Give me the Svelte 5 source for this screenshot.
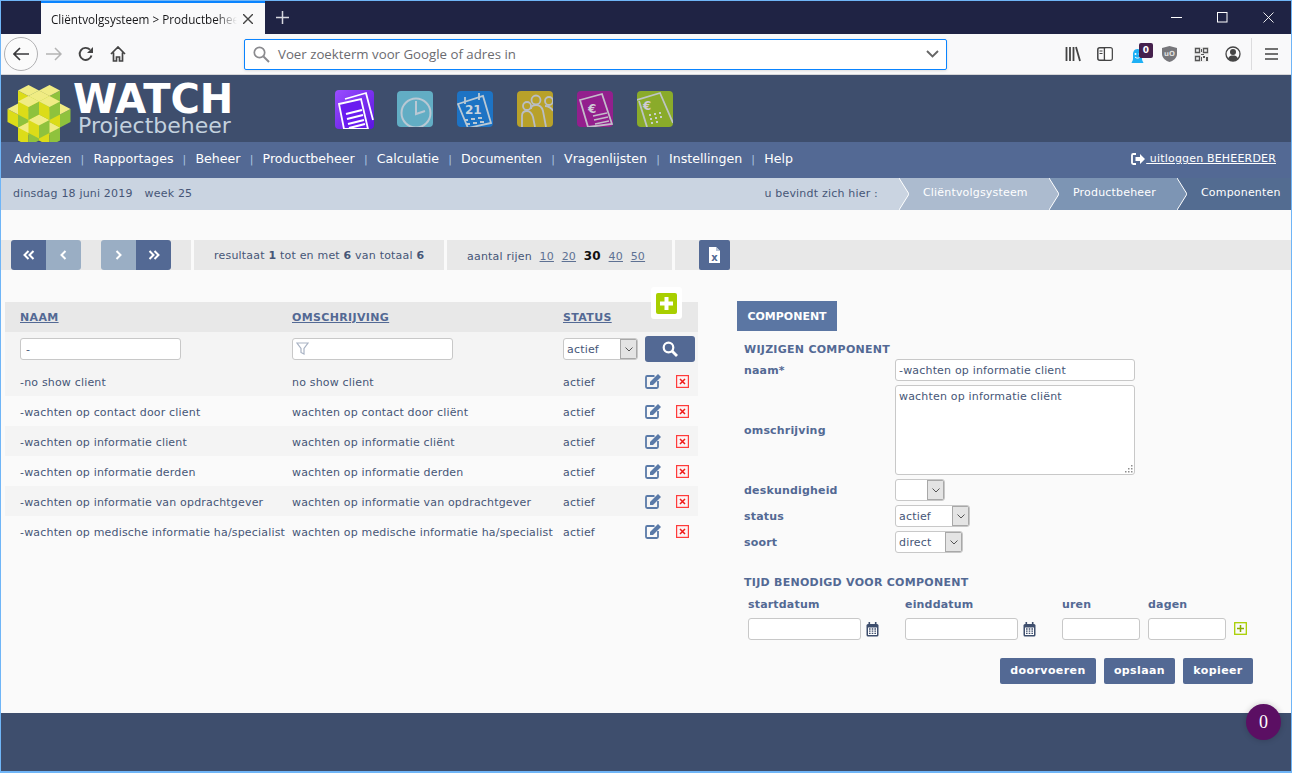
<script>
  const rows = [
    ['-no show client', 'no show client'],
    ['-wachten op contact door client', 'wachten op contact door cliënt'],
    ['-wachten op informatie client', 'wachten op informatie cliënt'],
    ['-wachten op informatie derden', 'wachten op informatie derden'],
    ['-wachten op informatie van opdrachtgever', 'wachten op informatie van opdrachtgever'],
    ['-wachten op medische informatie ha/specialist', 'wachten op medische informatie ha/specialist']
  ];
  const nav = ['Adviezen', 'Rapportages', 'Beheer', 'Productbeheer', 'Calculatie', 'Documenten', 'Vragenlijsten', 'Instellingen', 'Help'];
  const dx = 10.5, dy = 5.5, h = 13, cx = 32, cy = 26;
  const cross = [[0,0],[1,0],[-1,0],[0,1],[0,-1]];
  const mid = [[0,0],[1,1],[-1,-1],[1,-1],[-1,1]];
  const cells = [
    ...cross.map(([i,j]) => [i,j,-1]),
    ...mid.map(([i,j]) => [i,j,0]),
    ...cross.map(([i,j]) => [i,j,1])
  ].sort((a, b) => (a[0]+a[1]+a[2]) - (b[0]+b[1]+b[2]) || a[2] - b[2]);
  const cubes = cells.map(([i,j,k]) => {
    const x = cx + (i - j) * dx, y = cy + (i + j) * dy - k * h;
    return {
      top: `${x},${y - dy} ${x + dx},${y} ${x},${y + dy} ${x - dx},${y}`,
      left: `${x - dx},${y} ${x},${y + dy} ${x},${y + dy + h} ${x - dx},${y + h}`,
      right: `${x + dx},${y} ${x},${y + dy} ${x},${y + dy + h} ${x + dx},${y + h}`
    };
  });
  const grip = [[8,1],[5,4],[8,4],[2,7],[5,7],[8,7]];
</script>

{#snippet chevron()}
  <svg class="sel-chev" viewBox="0 0 8 5" width="8" height="5"><path d="M.5.5 4 4 7.500.5" fill="none" stroke="#555" stroke-width="1"/></svg>
{/snippet}

{#snippet select(text, width)}
  <div class="select" style="width:{width}px"><span>{text}</span><i>{@render chevron()}</i></div>
{/snippet}

{#snippet calendar()}
  <svg class="cal" viewBox="0 0 13 15" width="13" height="15"><rect x=".5" y="2" width="12" height="12.5" rx="1.5" fill="#3e4e6d"/><rect x="2.5" y="0" width="1.6" height="3" fill="#3e4e6d"/><rect x="8.9" y="0" width="1.6" height="3" fill="#3e4e6d"/><rect x="2" y="5.5" width="9" height="7.5" fill="#fff"/><path d="M3 7h1.6M5.7 7h1.6M8.4 7h1.6M3 9.2h1.6M5.7 9.2h1.6M8.4 9.2h1.6M3 11.4h1.6M5.7 11.4h1.6M8.4 11.4h1.6" stroke="#3e4e6d" stroke-width="1.3"/></svg>
{/snippet}

<div class="window">
  <div class="tabbar">
    <div class="tab">
      <span class="tab-title">Cliëntvolgsysteem &gt; Productbeheer</span>
      <svg class="tab-x" viewBox="0 0 10 10" width="10" height="10"><path d="M0 0l10 10M10 0L0 10" stroke="#444" stroke-width="1.4"/></svg>
    </div>
    <svg class="newtab" viewBox="0 0 13 13" width="13" height="13"><path d="M6.500 0v13M0 6.500h13" stroke="#d7d8df" stroke-width="1.500"/></svg>
    <div class="winctl">
      <span><svg viewBox="0 0 11 11" width="11" height="11"><path d="M0 5.500h11" stroke="#fff"/></svg></span>
      <span><svg viewBox="0 0 11 11" width="11" height="11"><rect x=".5" y=".5" width="9.500" height="9.500" fill="none" stroke="#fff"/></svg></span>
      <span><svg viewBox="0 0 11 11" width="11" height="11"><path d="M.5.5l10 10M10.500.5l-10 10" stroke="#fff" stroke-width=".9"/></svg></span>
    </div>
  </div>

  <div class="toolbar">
    <span class="tb back"><svg viewBox="0 0 16 14" width="16" height="14"><path d="M7 1 1 7l6 6M1 7h15" fill="none" stroke="#3a3a3c" stroke-width="1.700"/></svg></span>
    <span class="tb"><svg viewBox="0 0 16 14" width="16" height="14"><path d="M9 1l6 6-6 6M15 7H0" fill="none" stroke="#b4b4b4" stroke-width="1.500"/></svg></span>
    <span class="tb"><svg viewBox="0 0 16 16" width="16" height="16"><path d="M13.500 9.500A6 6 0 1 1 12 3.700" fill="none" stroke="#444" stroke-width="1.900"/><path d="M15 1v6H9z" fill="#444"/></svg></span>
    <span class="tb"><svg viewBox="0 0 16 16" width="16" height="16"><path d="M1 8l7-7 7 7M3.500 6.500V15h3v-4h3v4h3V6.500" fill="none" stroke="#444" stroke-width="1.700"/></svg></span>
    <div class="urlbar">
      <svg viewBox="0 0 17 17" width="17" height="17"><circle cx="6.500" cy="6.500" r="5.200" fill="none" stroke="#8a8a8e" stroke-width="1.700"/><path d="M10.500 10.500 16 16" stroke="#8a8a8e" stroke-width="2"/></svg>
      <span class="placeholder">Voer zoekterm voor Google of adres in</span>
      <svg class="url-chev" viewBox="0 0 13 8" width="13" height="8"><path d="M1 1l5.500 5.500L12 1" fill="none" stroke="#666" stroke-width="1.900"/></svg>
    </div>
    <span class="tb"><svg viewBox="0 0 16 16" width="16" height="16"><path d="M1.500 1v14M5 1v14M8.500 1v14M11 1l4 14" fill="none" stroke="#444" stroke-width="1.800"/></svg></span>
    <span class="tb"><svg viewBox="0 0 16 14" width="16" height="14"><rect x=".8" y=".8" width="14.400" height="12.400" rx="2" fill="none" stroke="#444" stroke-width="1.500"/><path d="M7.500 1v12" stroke="#444" stroke-width="1.500"/><rect x="8.200" y="1.500" width="6.300" height="11" fill="#fff"/><path d="M2.500 4h3M2.500 6.500h3" stroke="#444"/></svg></span>
    <span class="tb ghost">
      <svg viewBox="0 0 13 16" width="13" height="16"><path d="M6.500 1C3 1 2 4 2 6.500V11c0 1-1 3-1.500 4h12C12 14 11 12 11 11V6.500C11 4 10 1 6.500 1z" fill="#1eb0f5"/><circle cx="4.500" cy="6" r="1" fill="#fff"/><circle cx="8.500" cy="6" r="1" fill="#fff"/><path d="M4 9c1.500 1.500 3.500 1.500 5 0" fill="none" stroke="#fff"/></svg>
      <b>0</b>
    </span>
    <span class="tb"><svg viewBox="0 0 15 16" width="15" height="16"><path d="M7.500 0 15 2v6c0 4-4 7-7.500 8C4 15 0 12 0 8V2z" fill="#77777b"/><text x="7.500" y="10" class="ublock">uO</text></svg></span>
    <span class="tb"><svg viewBox="0 0 15 15" width="15" height="15"><rect width="15" height="15" fill="#eee"/><path d="M1.500 1.500h4v4h-4zM9.500 1.500h4v4h-4zM1.500 9.500h4v4h-4z" fill="none" stroke="#555" stroke-width="1.300"/><path d="M7 2h1v3H7zM7 7h3v1H7zM9 9h2v2H9zM12 10h2v4h-2zM7 10h1v4H7z" fill="#555"/></svg></span>
    <span class="tb"><svg viewBox="0 0 16 16" width="16" height="16"><circle cx="8" cy="8" r="7" fill="none" stroke="#444" stroke-width="1.300"/><circle cx="8" cy="6" r="3" fill="#444"/><path d="M3 12.500C4 10 6 9.500 8 9.500s4 .5 5 3C12 14 10 15 8 15s-4-1-5-2.500z" fill="#444"/></svg></span>
    <span class="divider"></span>
    <span class="tb"><svg viewBox="0 0 13 12" width="13" height="12"><path d="M0 1h13M0 6h13M0 11h13" stroke="#444" stroke-width="1.700"/></svg></span>
  </div>

  <header class="brand">
    <div class="logo">
      <svg class="logo-mark" viewBox="0 0 64 66" width="64" height="66">
        {#each cubes as c}
          <polygon points={c.left} fill="#dcdc18"/>
          <polygon points={c.right} fill="#8fc23d"/>
          <polygon points={c.top} fill="#f0ec84"/>
        {/each}
      </svg>
      <div class="logo-text">
        <div class="watch">WATCH</div>
        <div class="proj">Projectbeheer</div>
      </div>
    </div>
    <div class="apps">
      <svg class="big" viewBox="0 0 39 39" width="39" height="39">
        <defs><linearGradient id="g1" x1="0" y1="0" x2="1" y2="1"><stop offset="0" stop-color="#9a4dff"/><stop offset="1" stop-color="#5a14e0"/></linearGradient></defs>
        <rect width="39" height="39" rx="4" fill="url(#g1)"/>
        <path d="M10 9 31 3l7 27" fill="none" stroke="#fff" stroke-width="1.800"/>
        <path d="M4 14 26 9l7 30H9z" fill="#6a1cf0" stroke="#fff" stroke-width="1.800"/>
        <path d="M11 24l16-4M12 29l16-4M13 34l16-4M14 38l16-4" stroke="#fff" stroke-width="2.200"/>
      </svg>
      <svg viewBox="0 0 36 36" width="36" height="36"><rect width="36" height="36" rx="4" fill="#62adc4"/><circle cx="19" cy="22" r="14.500" fill="none" stroke="#b9c8d4" stroke-width="2"/><path d="M19 10v13l9-3" fill="none" stroke="#b9c8d4" stroke-width="2"/></svg>
      <svg viewBox="0 0 36 36" width="36" height="36"><rect width="36" height="36" rx="4" fill="#1d73c4"/><path d="M1 13 26 5l8 27-23 5z" fill="none" stroke="#b9c8d4" stroke-width="1.800"/><path d="M8 6v7M22 2v7" stroke="#b9c8d4" stroke-width="1.800"/><text x="8" y="23" class="cal-num">21</text><path d="M7 29h4M14 28h4M21 27h4M9 33h4M16 32h4M23 31h4" stroke="#b9c8d4" stroke-width="2"/></svg>
      <svg viewBox="0 0 36 36" width="36" height="36"><rect width="36" height="36" rx="4" fill="#b8a12a"/><g fill="none" stroke="#b9bdc4" stroke-width="1.800"><circle cx="10" cy="15" r="4"/><circle cx="19" cy="9" r="4.500"/><circle cx="32" cy="10" r="4"/><path d="M5 36V25c0-3 2-5 5-5s5 3 6 6l2 10M14 18c0-3 2-4 5-4s6 2 7 6l3 16M28 15c3 0 7 2 8 5"/></g></svg>
      <svg viewBox="0 0 36 36" width="36" height="36"><rect width="36" height="36" rx="4" fill="#931f8d"/><path d="M3 9 25 3l10 30-24 3z" fill="none" stroke="#c3bcc9" stroke-width="1.800"/><text x="11" y="22" class="euro">€</text><path d="M16 25l14-3M17 29l14-3M18 33l14-3" stroke="#c3bcc9" stroke-width="1.600"/></svg>
      <svg viewBox="0 0 36 36" width="36" height="36"><rect width="36" height="36" rx="4" fill="#8aab2a"/><path d="M0 9 23 2l13 30" fill="none" stroke="#bdc4c4" stroke-width="1.800"/><path d="M2 10l8 26" stroke="#bdc4c4" stroke-width="1.800"/><text x="6" y="19" class="euro">€</text><path d="M12 24h2M17 23h2M22 22h2M13 28h2M18 27h2M23 26h2M14 32h2M19 31h2" stroke="#c9d0c8" stroke-width="2.200"/></svg>
    </div>
  </header>

  <nav class="mainnav">
    {#each nav as item, i}
      {#if i > 0}<span class="sep">|</span>{/if}
      <span class="item">{item}</span>
    {/each}
    <span class="logout">
      <svg viewBox="0 0 15 12" width="15" height="12"><path d="M5 1H2.200C1.400 1 1 1.500 1 2.200v7.600C1 10.500 1.400 11 2.200 11H5" fill="none" stroke="#fff" stroke-width="1.800"/><path d="M9 1l5 5-5 5V8H4.500V4H9z" fill="#fff"/></svg>
      <u>&nbsp;uitloggen BEHEERDER</u>
    </span>
  </nav>

  <div class="crumbbar">
    <span class="date">dinsdag 18 juni 2019</span>
    <span class="week">week 25</span>
    <span class="here">u bevindt zich hier :</span>
    <svg class="arrow" viewBox="0 0 10 32" width="10" height="32" style="background:#acbbcf"><polygon points="0,0 10,16 0,32" fill="#cad4e1"/><polyline points="0,0 10,16 0,32" fill="none" stroke="#fff"/></svg>
    <span class="crumb c1">Cliëntvolgsysteem</span>
    <svg class="arrow" viewBox="0 0 10 32" width="10" height="32" style="background:#7d95b4"><polygon points="0,0 10,16 0,32" fill="#acbbcf"/><polyline points="0,0 10,16 0,32" fill="none" stroke="#fff"/></svg>
    <span class="crumb c2">Productbeheer</span>
    <svg class="arrow" viewBox="0 0 10 32" width="10" height="32" style="background:#536c91"><polygon points="0,0 10,16 0,32" fill="#7d95b4"/><polyline points="0,0 10,16 0,32" fill="none" stroke="#fff"/></svg>
    <span class="crumb c3">Componenten</span>
  </div>

  <main class="content">
    <div class="pager">
      <div class="seg seg-btns">
        <div class="btnpair">
          <span class="pg dark"><svg viewBox="0 0 12 10" width="12" height="10"><path d="M5.500 1 1.500 5l4 4M10.500 1l-4 4 4 4" fill="none" stroke="#fff" stroke-width="2"/></svg></span>
          <span class="pg light"><svg viewBox="0 0 7 10" width="7" height="10"><path d="M5.500 1l-4 4 4 4" fill="none" stroke="#fff" stroke-width="2"/></svg></span>
        </div>
        <div class="btnpair">
          <span class="pg light"><svg viewBox="0 0 7 10" width="7" height="10"><path d="M1.500 1l4 4-4 4" fill="none" stroke="#fff" stroke-width="2"/></svg></span>
          <span class="pg dark"><svg viewBox="0 0 12 10" width="12" height="10"><path d="M1.500 1l4 4-4 4M6.500 1l4 4-4 4" fill="none" stroke="#fff" stroke-width="2"/></svg></span>
        </div>
      </div>
      <div class="seg seg-text s2">resultaat <b>1</b> tot en met <b>6</b> van totaal <b>6</b></div>
      <div class="seg seg-text s3">aantal rijen <u>10</u> <u>20</u> <b class="cur">30</b> <u>40</u> <u>50</u></div>
      <div class="seg s4">
        <span class="xls"><svg viewBox="0 0 11 16" width="11" height="16"><path d="M0 0h7l4 4v12H0z" fill="#fff"/><path d="M7 0v4h4" fill="#b7c3d6"/><text x="5.500" y="14" class="xtxt">x</text></svg></span>
      </div>
    </div>

    <div class="columns">
      <section class="list">
        <span class="addbox"><svg viewBox="0 0 21 21" width="21" height="21"><rect width="21" height="21" rx="2" fill="#a8cf00"/><path d="M10.500 4v13M4 10.500h13" stroke="#fff" stroke-width="4"/></svg></span>
        <div class="row head">
          <a>NAAM</a><a>OMSCHRIJVING</a><a>STATUS</a><span></span>
        </div>
        <div class="row filter">
          <input class="f-in" value="-" />
          <div class="f-wrap">
            <input class="f-in" />
            <svg class="funnel" viewBox="0 0 13 13" width="13" height="13"><path d="M1 1h11L8 6.500V12L5 10.500v-4z" fill="none" stroke="#a9b3c4" stroke-width="1.200"/></svg>
          </div>
          {@render select('actief', 75)}
          <button class="search"><svg viewBox="0 0 16 16" width="16" height="16"><circle cx="6.500" cy="6.500" r="4.800" fill="none" stroke="#fff" stroke-width="2.200"/><path d="M10 10l5 5" stroke="#fff" stroke-width="2.800"/></svg></button>
        </div>
        {#each rows as r, i}
          <div class="row item-row" class:odd={i % 2 === 0}>
            <span>{r[0]}</span><span>{r[1]}</span><span>actief</span>
            <span class="acts">
              <svg viewBox="0 0 17 16" width="17" height="16"><path d="M9.500 3H2.200C1.400 3 1 3.500 1 4.200v9.600C1 14.500 1.400 15 2.200 15h9.600c.7 0 1.200-.5 1.200-1.200V8" fill="none" stroke="#5a7aa8" stroke-width="1.800"/><path d="M5 9l8-8 3 3-8 8H5z" fill="#5a7aa8"/></svg>
              <svg class="del" viewBox="0 0 13 13" width="13" height="13"><rect x=".6" y=".6" width="11.800" height="11.800" fill="#fdf3f3" stroke="#ff3b3b" stroke-width="1.200"/><path d="M4 4l5 5M9 4l-5 5" stroke="#f01818" stroke-width="1.500"/></svg>
            </span>
          </div>
        {/each}
      </section>

      <section class="detail">
        <div class="dtab">COMPONENT</div>
        <h3 class="wijzig">WIJZIGEN COMPONENT</h3>
        <div class="form">
          <label>naam*</label><input class="d-in" value="-wachten op informatie client" />
          <label>omschrijving</label>
          <div class="ta-wrap">
            <textarea class="d-ta">wachten op informatie cliënt</textarea>
            <svg class="grip" viewBox="0 0 10 9" width="10" height="9">
              {#each grip as g}<rect x={g[0]} y={g[1]} width="1.500" height="1.500" fill="#8d8d8d"/>{/each}
            </svg>
          </div>
          <label>deskundigheid</label>{@render select('', 50)}
          <label>status</label>{@render select('actief', 75)}
          <label>soort</label>{@render select('direct', 68)}
        </div>
        <h3 class="tijd">TIJD BENODIGD VOOR COMPONENT</h3>
        <div class="time">
          <div class="tf w157"><label>startdatum</label><span class="tfrow"><input class="t-in w113" />{@render calendar()}</span></div>
          <div class="tf w157"><label>einddatum</label><span class="tfrow"><input class="t-in w113" />{@render calendar()}</span></div>
          <div class="tf w86"><label>uren</label><span class="tfrow"><input class="t-in w78" /></span></div>
          <div class="tf"><label>dagen</label><span class="tfrow"><input class="t-in w78" /><svg class="addmini" viewBox="0 0 13 13" width="13" height="13"><rect x=".7" y=".7" width="11.600" height="11.600" fill="none" stroke="#a8cf00" stroke-width="1.300"/><path d="M6.500 3v7M3 6.500h7" stroke="#8cad00" stroke-width="1.500"/></svg></span></div>
        </div>
        <div class="actions">
          <button class="act a1">doorvoeren</button>
          <button class="act a2">opslaan</button>
          <button class="act a3">kopieer</button>
        </div>
      </section>
    </div>
  </main>

  <footer class="foot"></footer>
  <div class="bubble">0</div>
</div>

<style>
  :global(body) { margin: 0; background: #fafafa; }
  .window { position: relative; width: 1292px; height: 773px; box-sizing: border-box; border: 1px solid #6fb5f7; border-bottom-width: 2px; display: flex; flex-direction: column; overflow: hidden; font-family: "DejaVu Sans", Verdana, sans-serif; font-size: 11px; letter-spacing: .18px; color: #465677; background: #fafafa; }

  .tabbar { height: 33px; flex: none; background: #1f2344; display: flex; align-items: stretch; }
  .tab { margin-left: 40px; width: 224px; box-sizing: border-box; background: #f9f9fa; border-top: 2px solid #0a84ff; display: flex; align-items: center; padding-left: 10px; position: relative; }
  .tab-title { width: 186px; overflow: hidden; white-space: nowrap; font: 11.700px "Open Sans", sans-serif; letter-spacing: 0; color: #18181a; -webkit-mask-image: linear-gradient(90deg, #000 165px, transparent 186px); mask-image: linear-gradient(90deg, #000 165px, transparent 186px); }
  .tab-x { margin-left: 6px; }
  .newtab { align-self: center; margin-left: 11px; }
  .winctl { margin-left: auto; display: flex; }
  .winctl span { width: 46px; display: flex; align-items: center; justify-content: center; }

  .toolbar { height: 41px; flex: none; box-sizing: border-box; background: #f9f9fa; border-bottom: 1px solid #d6d6d8; display: flex; align-items: center; padding-left: 4px; }
  .tb { width: 32px; height: 32px; flex: none; display: flex; align-items: center; justify-content: center; position: relative; }
  .back { width: 34px; height: 34px; box-sizing: border-box; border: 1px solid #b1b1b3; border-radius: 50%; background: #fbfbfb; margin: 0 0 0 -1px; }
  .urlbar { margin-left: 110px; margin-right: 110px; width: 703px; height: 31px; box-sizing: border-box; flex: none; background: #fff; border: 1px solid #0a84ff; border-radius: 2px; display: flex; align-items: center; padding-left: 8px; box-shadow: 0 1px 3px rgba(0,0,0,.12); }
  .placeholder { margin-left: 8px; font: 13.250px "Open Sans", sans-serif; letter-spacing: 0; color: #6b6b70; }
  .url-chev { margin-left: auto; margin-right: 7px; }
  .ghost b { position: absolute; left: 18px; top: 5px; width: 14px; height: 15px; background: #45214d; color: #fff; border-radius: 2px; font: bold 9px/15px "DejaVu Sans", sans-serif; letter-spacing: 0; text-align: center; }
  .ghost svg { margin-top: 4px; }
  .ublock { font: bold 7px "DejaVu Sans", sans-serif; letter-spacing: 0; fill: #ddd; text-anchor: middle; }
  .divider { width: 1px; height: 32px; background: #dcdcde; margin: 0 3px 0 2px; }

  .brand { height: 67px; flex: none; background: #3e4e6d; display: flex; position: relative; letter-spacing: 0; }
  .logo { display: flex; margin-left: 6px; width: 328px; flex: none; }
  .logo-mark { margin-top: 8px; flex: none; }
  .logo-text { margin-left: 2px; margin-top: 7px; }
  .watch { font: bold 40px/34px "DejaVu Sans", sans-serif; color: #fff; letter-spacing: 0; }
  .proj { font: 22px/18px "DejaVu Sans", sans-serif; color: #c3d1de; margin-left: 5px; margin-top: 1px; }
  .apps { display: flex; align-items: center; gap: 24px; height: 67px; padding-top: 1px; box-sizing: border-box; }
  .apps svg { flex: none; }
  .apps .big { margin-right: -1px; }
  .cal-num { font: bold 12px "DejaVu Sans", sans-serif; fill: #c9d4de; }
  .euro { font: bold 12px "DejaVu Sans", sans-serif; fill: #d0cbd6; }

  .mainnav { height: 36px; flex: none; box-sizing: border-box; padding: 0 0 4px 13px; background: #536994; color: #fff; display: flex; align-items: center; font-size: 12.600px; letter-spacing: 0; position: relative; }
  .item { color: #fff; }
  .sep { width: 22px; text-align: center; color: #a9c4e0; font-size: 11px; margin-top: 2px; }
  .logout { margin-left: auto; margin-right: 15px; display: flex; align-items: center; font-size: 11px; letter-spacing: .18px; white-space: pre; margin-top: 1px; }

  .crumbbar { height: 32px; flex: none; background: #cad4e1; display: flex; align-items: center; color: #465677; font-size: 11px; line-height: 30px; }
  .date { margin-left: 12px; }
  .week { margin-left: 12px; }
  .here { margin-left: auto; margin-right: 21px; letter-spacing: .2px; }
  .arrow { flex: none; display: block; }
  .crumb { height: 32px; line-height: 30px; color: #fff; padding-left: 14px; box-sizing: border-box; flex: none; white-space: nowrap; overflow: hidden; }
  .c1 { width: 140px; background: #acbbcf; }
  .c2 { width: 118px; background: #7d95b4; }
  .c3 { width: 104px; background: #536c91; }

  .content { flex: 1; background: #fafafa; min-height: 0; }
  .pager { margin-top: 30px; display: flex; gap: 3px; height: 30px; }
  .seg { background: #e8e8e8; box-sizing: border-box; height: 30px; flex: none; display: flex; align-items: center; }
  .seg-btns { width: 190px; padding: 0 20px 0 10px; justify-content: space-between; }
  .btnpair { display: flex; border-radius: 3px; overflow: hidden; }
  .pg { width: 35px; height: 30px; display: flex; align-items: center; justify-content: center; }
  .pg.dark { background: #536994; }
  .pg.light { background: #9aaec4; }
  .seg-text { display: block; line-height: 32px; padding-left: 20px; white-space: pre-wrap; color: #465677; letter-spacing: .2px; }
  .seg-text u { color: #5e7193; margin-left: 4px; }
  .cur { color: #111; margin-left: 4px; font-size: 12px; }
  .s2 { width: 250px; }
  .s3 { width: 225px; }
  .s4 { flex: 1; padding-left: 24px; }
  .xls { width: 31px; height: 30px; background: #536994; border-radius: 2px; display: flex; align-items: center; justify-content: center; }
  .xtxt { font: bold 10px "DejaVu Sans", sans-serif; fill: #536994; text-anchor: middle; }

  .columns { display: flex; margin-top: 32px; align-items: flex-start; }
  .list { position: relative; margin-left: 4px; width: 693px; flex: none; }
  .addbox { position: absolute; left: 646px; top: -15px; width: 31px; height: 32px; background: #fff; border-radius: 3px; display: flex; align-items: center; justify-content: center; }
  .row { display: grid; grid-template-columns: 272px 271px 82px 53px; padding-left: 15px; align-items: center; white-space: nowrap; box-sizing: border-box; }
  .head { height: 30px; background: #e8e8e8; }
  .head a { font-weight: bold; color: #536994; text-decoration: underline; font-size: 11px; letter-spacing: .35px; }
  .filter { height: 34px; background: #f4f4f4; }
  .f-wrap { position: relative; width: 161px; height: 22px; }
  .f-in { width: 161px; height: 22px; box-sizing: border-box; border: 1px solid #c8c8c8; border-radius: 3px; background: #fff; padding: 0 5px; font: 11px "DejaVu Sans", sans-serif; letter-spacing: .18px; color: #465677; display: block; outline: none; }
  .funnel { position: absolute; left: 4px; top: 4px; }
  .select { height: 22px; box-sizing: border-box; border: 1px solid #c8c8c8; border-radius: 3px; background: #fff; display: flex; justify-content: space-between; font-size: 11px; overflow: hidden; }
  .select span { padding-left: 3px; line-height: 22px; }
  .select i { width: 17px; height: 20px; box-sizing: border-box; background: #e4e4e4; border: 1px solid #a8a8a8; display: flex; align-items: center; justify-content: center; flex: none; }
  .search { width: 50px; height: 26px; padding: 0; border: 0; border-radius: 3px; background: #536994; display: flex; align-items: center; justify-content: center; }
  .item-row { height: 30px; padding-top: 2px; background: #fafafa; }
  .item-row.odd { background: #f4f4f4; }
  .acts { display: flex; align-items: center; gap: 14px; margin-top: -2px; }
  .del { margin-top: 1px; }

  .detail { margin-left: 39px; margin-top: -1px; flex: 1; }
  .dtab { width: 100px; height: 30px; background: #5b76a3; color: #fff; font-weight: bold; line-height: 31px; text-align: center; font-size: 11px; letter-spacing: 0; }
  h3 { margin: 0; font-size: 11px; font-weight: bold; color: #536994; letter-spacing: .27px; }
  .wijzig { margin: 12px 0 0 7px; line-height: 14px; }
  .form { margin: 2px 0 0 7px; display: grid; grid-template-columns: 151px 240px; row-gap: 4px; align-items: center; }
  .form label, .tf label { font-weight: bold; color: #536994; font-size: 11px; }
  .d-in { width: 240px; height: 22px; box-sizing: border-box; border: 1px solid #c8c8c8; border-radius: 3px; background: #fff; padding: 0 3px; font: 11px "DejaVu Sans", sans-serif; letter-spacing: .18px; color: #465677; outline: none; }
  .ta-wrap { position: relative; width: 240px; height: 90px; }
  .d-ta { width: 240px; height: 90px; box-sizing: border-box; border: 1px solid #c8c8c8; border-radius: 3px; background: #fff; padding: 4px 3px; font: 11px/14px "DejaVu Sans", sans-serif; letter-spacing: .18px; color: #465677; display: block; outline: none; resize: none; }
  .grip { position: absolute; right: 2px; bottom: 2px; }
  .tijd { margin: 23px 0 0 7px; line-height: 14px; }
  .time { display: flex; margin: 8px 0 0 11px; }
  .tf { display: flex; flex-direction: column; }
  .tf label { line-height: 14px; }
  .w157 { width: 157px; }
  .w86 { width: 86px; }
  .tfrow { display: flex; align-items: center; margin-top: 6px; height: 22px; }
  .t-in { height: 22px; box-sizing: border-box; border: 1px solid #c8c8c8; border-radius: 3px; background: #fff; outline: none; padding: 0; }
  .w113 { width: 113px; }
  .w78 { width: 78px; }
  .cal { margin-left: 5px; }
  .addmini { margin-left: 8px; margin-top: -2px; }
  .actions { display: flex; margin: 18px 0 0 263px; gap: 8px; }
  .act { height: 26px; padding: 0 0 2px; border: 0; border-radius: 2px; background: #536994; color: #fff; font: bold 11px "DejaVu Sans", sans-serif; letter-spacing: .4px; }
  .a1 { width: 96px; }
  .a2 { width: 71px; }
  .a3 { width: 70px; }

  .foot { height: 58px; flex: none; background: #3e4e6d; }
  .bubble { position: absolute; left: 1245px; top: 703px; width: 35px; height: 36px; border-radius: 50%; background: #5b0f63; color: #fff; text-align: center; font: 18px/36px "Liberation Serif", serif; letter-spacing: 0; box-shadow: 0 0 6px rgba(0,0,0,.2); }
</style>
